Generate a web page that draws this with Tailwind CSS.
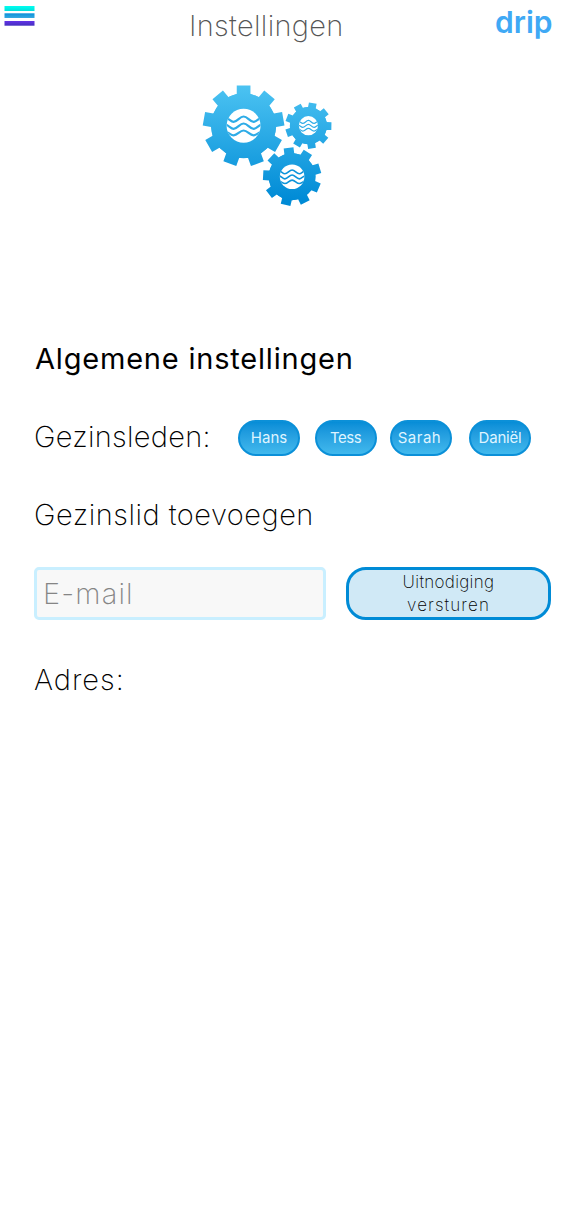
<!DOCTYPE html>
<html lang="nl">
<head>
<meta charset="utf-8">
<title>Instellingen</title>
<script src="https://cdn.jsdelivr.net/npm/@tailwindcss/browser@4"></script>
</head>
<body class="bg-white font-['Inter',sans-serif] text-black">
<main class="flex h-[1218px] w-[563px] flex-col overflow-hidden">
  <header class="flex h-[50px] shrink-0 items-start">
    <svg class="mt-1 ml-1 shrink-0" width="31" height="24" viewBox="0 0 31 24">
      <defs>
        <linearGradient id="m1" x2="0" y2="1"><stop stop-color="#00fff0"/><stop offset="1" stop-color="#00e0dc"/></linearGradient>
        <linearGradient id="m2" x2="0" y2="1"><stop stop-color="#0b90d8"/><stop offset="1" stop-color="#35a9e2"/></linearGradient>
        <linearGradient id="m3" x2="0" y2="1"><stop stop-color="#6432e8"/><stop offset="1" stop-color="#4330bd"/></linearGradient>
      </defs>
      <rect x=".5" y="2" width="30" height="5" fill="url(#m1)"/>
      <rect x=".5" y="9.3" width="30" height="4.7" fill="url(#m2)"/>
      <rect x=".5" y="17" width="30" height="4.7" fill="url(#m3)"/>
    </svg>
    <h1 class="ml-[154px] w-[306px] text-[29px] leading-[51px] font-extralight whitespace-nowrap text-[#555]"><span class="tracking-[0.32px]">Instellingen</span></h1>
    <span class="text-[30px] leading-[45px] font-semibold text-[#3fa9f5]">drip</span>
  </header>

  <svg class="mt-[30px] ml-[195px] shrink-0" width="145" height="135" viewBox="195 80 145 135">
    <defs>
      <linearGradient id="g" gradientUnits="userSpaceOnUse" x1="0" y1="85" x2="0" y2="200"><stop stop-color="#4cc3f2"/><stop offset="1" stop-color="#008bd6"/></linearGradient>
      <clipPath id="c"><circle r="17"/></clipPath>
      <g id="waves" clip-path="url(#c)" fill="none" stroke-width="2.2">
        <path d="M-20-9C-15-8-13-4-10-4C-6-4-4-9.300 0-9.300S6-4 10-4C13-4 15-8 20-9"/>
        <path d="M-20-2C-15-1-13 3-10 3C-6 3-4-2.300 0-2.300S6 3 10 3C13 3 15-1 20-2"/>
        <path d="M-20 5C-15 6-13 9.500-10 9.500C-6 9.500-4 4.700 0 4.700S6 9.500 10 9.500C13 9.500 15 6 20 5"/>
      </g>
    </defs>
    <g id="gears" fill="url(#g)"></g>
    <circle cx="243.600" cy="125.800" r="17" fill="#fff"/>
    <circle cx="308.400" cy="125.700" r="9.600" fill="#fff"/>
    <circle cx="292.100" cy="176.700" r="12.300" fill="#fff"/>
    <use href="#waves" transform="translate(243.600 125.800)" stroke="#2eace7"/>
    <use href="#waves" transform="translate(308.400 125.700) scale(.565)" stroke="#2eace7"/>
    <use href="#waves" transform="translate(292.100 176.700) scale(.724)" stroke="#0c94da"/>
  </svg>

  <section class="flex flex-col pl-[34px]">
    <h2 class="mt-[119px] h-[50px] pl-px text-[29px] leading-[50px] font-normal whitespace-nowrap"><span class="tracking-[0.8px]">Algemene instellingen</span></h2>
    <div class="mt-7 flex h-[50px] items-center">
      <span class="w-[204px] text-[29px] leading-[50px] font-extralight whitespace-nowrap"><span class="tracking-[0.27px]">Gezinsleden:</span></span>
      <div class="mt-0.5 flex text-[15px] text-[#dff4ff]">
        <span class="mr-[14.500px] flex h-9 w-[62px] items-center justify-center rounded-[18px] border-2 border-[#0b90d8] bg-linear-to-b from-[#068dd7] to-[#41b9ed]"><span class="tracking-[0px]">Hans</span></span>
        <span class="mr-[13px] flex h-9 w-[62px] items-center justify-center rounded-[18px] border-2 border-[#0b90d8] bg-linear-to-b from-[#068dd7] to-[#41b9ed]"><span class="tracking-[-0.5px]">Tess</span></span>
        <span class="mr-[17.500px] flex h-9 w-[62px] items-center justify-center rounded-[18px] border-2 border-[#0b90d8] bg-linear-to-b from-[#068dd7] to-[#41b9ed]"><span class="-ml-0.5 tracking-[0.5px]">Sarah</span></span>
        <span class="flex h-9 w-[62px] items-center justify-center rounded-[18px] border-2 border-[#0b90d8] bg-linear-to-b from-[#068dd7] to-[#41b9ed]"><span class="tracking-[-0.2px]">Daniël</span></span>
      </div>
    </div>
    <h3 class="mt-7 h-[50px] text-[29px] leading-[50px] font-extralight whitespace-nowrap"><span class="tracking-[0.5px]">Gezinslid toevoegen</span></h3>
    <div class="mt-[26px] flex h-[54px]">
      <div class="mt-px h-[53px] w-[292px] rounded-[5px] border-3 border-[#c9efff] bg-[#f8f8f8] pl-1.5 text-[29px] leading-[47px] font-extralight text-[#858585]"><span class="tracking-[1.15px]">E-mail</span></div>
      <button class="mt-px ml-5 flex h-[53px] w-[205px] flex-col items-center justify-center rounded-[20px] border-3 border-[#008bd6] bg-[#d0e9f6] text-[17px] leading-[23px] font-extralight"><span class="tracking-[0.3px]">Uitnodiging</span><span class="tracking-[1.1px]">versturen</span></button>
    </div>
    <p class="mt-[35px] h-[50px] text-[29px] leading-[50px] font-extralight"><span class="tracking-[1px]">Adres:</span></p>
  </section>
</main>
<script>
  // Nine tapered teeth per gear: centre x, centre y, outer radius, rotation in degrees
  const gears = [[243.6,125.8,40.3,0],[308.4,125.7,23,11],[292.1,176.7,29,-7]];
  document.getElementById('gears').innerHTML = gears.map(([x,y,r,a]) => {
    const p = [];
    for (let i = 0; i < 9; i++) {
      const t = (a + i * 40) * Math.PI / 180;
      for (const [u,v] of [[-.17,.79],[-.17,1],[.17,1],[.17,.79]])
        p.push((x + r*(u*Math.cos(t)+v*Math.sin(t))).toFixed(2) + ' ' + (y + r*(u*Math.sin(t)-v*Math.cos(t))).toFixed(2));
    }
    return `<path d="M${p.join('L')}Z"/><circle cx="${x}" cy="${y}" r="${(r*.808).toFixed(2)}"/>`;
  }).join('');
</script>
</body>
</html>
